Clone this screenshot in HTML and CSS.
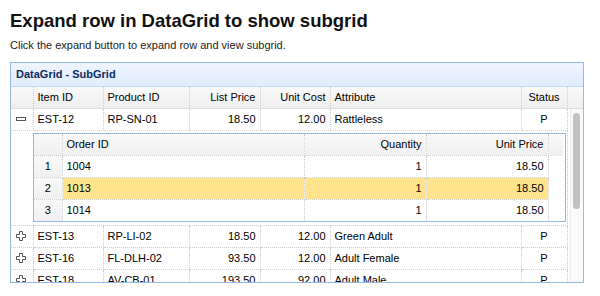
FILE: index.html
```html
<!DOCTYPE html>
<html>
<head>
  <meta charset="utf-8">
  <link rel="stylesheet" href="styles.css">
</head>
<body>
  <h2>Expand row in DataGrid to show subgrid</h2>
  <p class="intro">Click the expand button to expand row and view subgrid.</p>

  <div class="panel">
    <div class="panel-header">DataGrid - SubGrid</div>

    <div class="grid-head">
      <table class="grid">
        <colgroup>
          <col class="c-exp"><col class="c-item"><col class="c-prod"><col class="c-list">
          <col class="c-cost"><col class="c-attr"><col class="c-status">
        </colgroup>
        <tr>
          <td></td>
          <td>Item ID</td>
          <td>Product ID</td>
          <td class="num">List Price</td>
          <td class="num">Unit Cost</td>
          <td>Attribute</td>
          <td class="mid">Status</td>
        </tr>
      </table>
      <div class="head-filler"></div>
    </div>

    <div class="grid-body">
      <div class="grid-rows">
        <table class="grid">
          <colgroup>
            <col class="c-exp"><col class="c-item"><col class="c-prod"><col class="c-list">
            <col class="c-cost"><col class="c-attr"><col class="c-status">
          </colgroup>
          <tr>
            <td class="exp">
              <svg width="11" height="11" viewBox="0 0 11 11"><rect x="0.5" y="3.5" width="9" height="3" fill="#fff" stroke="#555"/></svg>
            </td>
            <td>EST-12</td>
            <td>RP-SN-01</td>
            <td class="num">18.50</td>
            <td class="num">12.00</td>
            <td>Rattleless</td>
            <td class="mid">P</td>
          </tr>
          <tr class="detail">
            <td class="exp-blank"></td>
            <td colspan="6" class="detail-cell">
              <div class="subgrid">
                <table class="grid sub">
                  <colgroup>
                    <col class="s-num"><col class="s-order"><col class="s-qty"><col class="s-price"><col class="s-fill">
                  </colgroup>
                  <tr class="sub-head">
                    <td class="rownum"></td>
                    <td>Order ID</td>
                    <td class="num">Quantity</td>
                    <td class="num">Unit Price</td>
                    <td class="fill"></td>
                  </tr>
                  <tr>
                    <td class="rownum">1</td>
                    <td>1004</td>
                    <td class="num">1</td>
                    <td class="num">18.50</td>
                    <td class="fill"></td>
                  </tr>
                  <tr class="selected">
                    <td class="rownum">2</td>
                    <td>1013</td>
                    <td class="num">1</td>
                    <td class="num">18.50</td>
                    <td class="fill"></td>
                  </tr>
                  <tr>
                    <td class="rownum">3</td>
                    <td>1014</td>
                    <td class="num">1</td>
                    <td class="num">18.50</td>
                    <td class="fill"></td>
                  </tr>
                </table>
              </div>
            </td>
          </tr>
          <tr>
            <td class="exp">
              <svg width="11" height="11" viewBox="0 0 11 11"><path d="M3.5 0.5h3v3h3v3h-3v3h-3v-3h-3v-3h3z" fill="#fff" stroke="#555"/></svg>
            </td>
            <td>EST-13</td>
            <td>RP-LI-02</td>
            <td class="num">18.50</td>
            <td class="num">12.00</td>
            <td>Green Adult</td>
            <td class="mid">P</td>
          </tr>
          <tr>
            <td class="exp">
              <svg width="11" height="11" viewBox="0 0 11 11"><path d="M3.5 0.5h3v3h3v3h-3v3h-3v-3h-3v-3h3z" fill="#fff" stroke="#555"/></svg>
            </td>
            <td>EST-16</td>
            <td>FL-DLH-02</td>
            <td class="num">93.50</td>
            <td class="num">12.00</td>
            <td>Adult Female</td>
            <td class="mid">P</td>
          </tr>
          <tr>
            <td class="exp">
              <svg width="11" height="11" viewBox="0 0 11 11"><path d="M3.5 0.5h3v3h3v3h-3v3h-3v-3h-3v-3h3z" fill="#fff" stroke="#555"/></svg>
            </td>
            <td>EST-18</td>
            <td>AV-CB-01</td>
            <td class="num">193.50</td>
            <td class="num">92.00</td>
            <td>Adult Male</td>
            <td class="mid">P</td>
          </tr>
        </table>
      </div>
      <div class="scrollbar"><div class="thumb"></div></div>
    </div>
  </div>
</body>
</html>
```

FILE: styles.css
```css
body {
  margin: 0;
  padding: 0 10px;
  font-family: "Liberation Sans", Arial, sans-serif;
  color: #000;
  background: #fff;
}

h2 {
  margin: 10px 0 0;
  font-size: 18.5px;
  line-height: 21px;
  color: #111;
}

.intro {
  margin: 7px 0 10px;
  font-size: 11px;
  line-height: 14px;
  color: #222;
}

/* Panel around the datagrid */
.panel {
  width: 572px;
  border: 1px solid #95b8e7;
  font-size: 11px;
}

.panel-header {
  height: 23px;
  line-height: 23px;
  padding-left: 5px;
  font-weight: bold;
  color: #0e2d5f;
  background: linear-gradient(to bottom, #eff5ff 0, #e0ecff 100%);
  border-bottom: 1px solid #c6d7f0;
}

/* Shared table look */
.grid {
  border-collapse: collapse;
  table-layout: fixed;
}

.grid td {
  height: 21px;
  padding: 0 4px;
  border-right: 1px dotted #ccc;
  border-bottom: 1px dotted #ccc;
  white-space: nowrap;
  overflow: hidden;
  line-height: 21px;
}

.grid .num {
  text-align: right;
}

.grid .mid {
  text-align: center;
}

.c-exp { width: 22px; }
.c-item { width: 70px; }
.c-prod { width: 86px; }
.c-list { width: 71px; }
.c-cost { width: 70px; }
.c-attr { width: 191px; }
.c-status { width: 46px; }

.grid-head,
.grid-body {
  display: flex;
}

.grid-head {
  background: linear-gradient(to bottom, #f9f9f9 0, #efefef 100%);
  border-bottom: 1px solid #dddddd;
}

.grid-head .grid {
  width: 556px;
}

.grid-head .grid td {
  border-bottom: 0;
}

.head-filler {
  flex: 1;
}

.grid-body {
  height: 173px;
  overflow: hidden;
}

.grid-rows {
  width: 559px;
}

.grid-rows > .grid {
  width: 556px;
}

.grid td.exp {
  padding: 0 0 0 5px;
  line-height: 0;
}

.grid td.exp-blank {
  border-right: 0;
}

.grid td.detail-cell {
  padding: 2px 1px 3px 0;
  height: auto;
  line-height: normal;
}

/* Nested grid */
.subgrid {
  border: 1px solid #95b8e7;
}

.sub {
  width: 529px;
}

.s-num { width: 28px; }
.s-order { width: 242px; }
.s-qty { width: 122px; }
.s-price { width: 122px; }
.s-fill { width: 15px; }

.sub tr:last-child td {
  border-bottom: 0;
}

.sub-head td {
  background: linear-gradient(to bottom, #f9f9f9 0, #efefef 100%);
}

.grid td.rownum {
  text-align: center;
  padding: 0;
  background: linear-gradient(to bottom, #f9f9f9 0, #efefef 100%);
}

.grid td.fill {
  border-right: 0;
  border-bottom-color: transparent;
}

.sub-head td.fill {
  border-bottom: 0;
}

.selected td {
  background: #ffe48d;
}

.selected td.fill {
  background: #fff;
}

/* Fake scrollbar */
.scrollbar {
  width: 12px;
  border-left: 1px solid #ececec;
  background: #fafafa;
  padding-top: 4px;
}

.thumb {
  width: 7px;
  height: 96px;
  margin-left: 2px;
  border-radius: 4px;
  background: #c1c1c1;
}
```
